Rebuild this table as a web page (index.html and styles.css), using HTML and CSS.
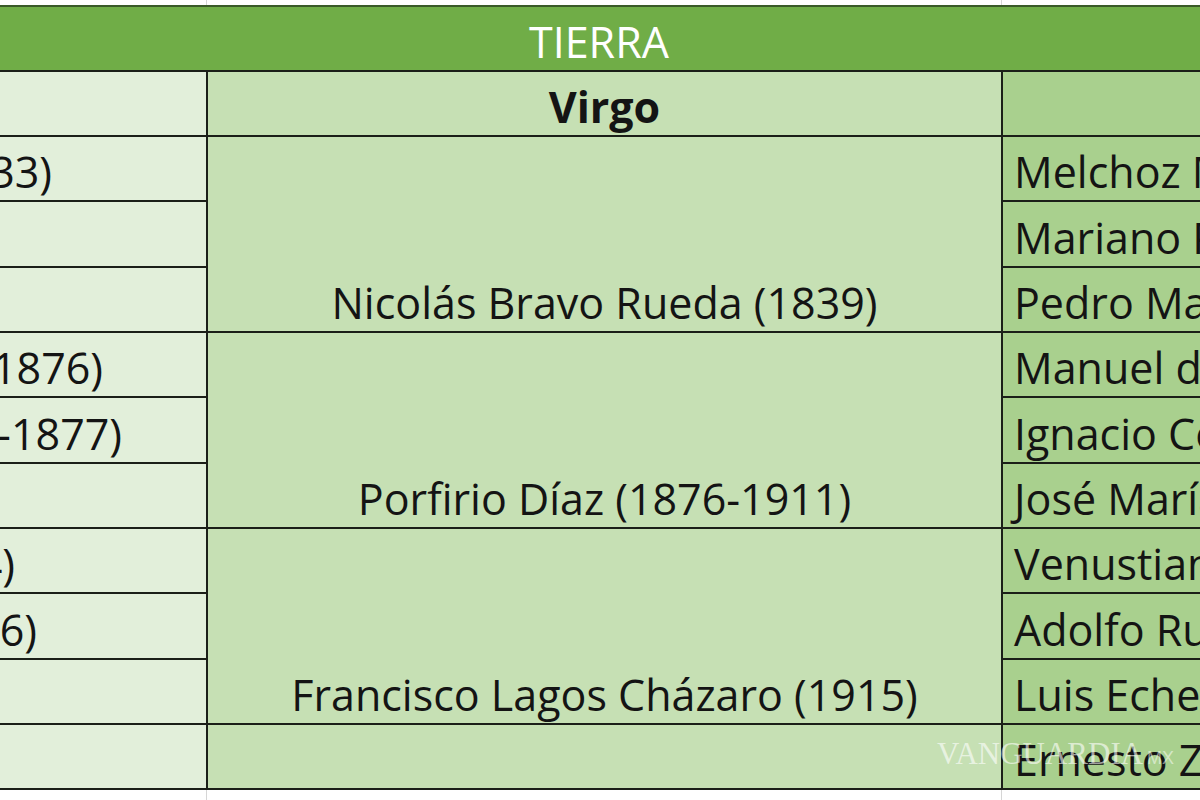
FILE: index.html
```html
<!DOCTYPE html>
<html lang="es">
<head>
<meta charset="utf-8">
<title>Tierra - Virgo</title>
<link rel="stylesheet" href="styles.css">
</head>
<body>
<div class="page">
  <div class="sheet">
    <div class="cell title">TIERRA</div>

    <div class="cell c1 head"></div>
    <div class="cell c2 head mid"><b>Virgo</b></div>
    <div class="cell c3 head"></div>

    <div class="cell c1 frag e52">(1833)</div>
    <div class="cell c2 mid span3">Nicolás Bravo Rueda (1839)</div>
    <div class="cell c3">Melchoz Múzquiz (1832)</div>
    <div class="cell c1"></div>
    <div class="cell c3">Mariano Paredes (1846)</div>
    <div class="cell c1"></div>
    <div class="cell c3">Pedro María Anaya (1847)</div>

    <div class="cell c1 frag e103">(1876)</div>
    <div class="cell c2 mid span3">Porfirio Díaz (1876-1911)</div>
    <div class="cell c3">Manuel de la Peña (1847)</div>
    <div class="cell c1 frag e122">(1876-1877)</div>
    <div class="cell c3">Ignacio Comonfort (1855)</div>
    <div class="cell c1"></div>
    <div class="cell c3">José María Iglesias (1876)</div>

    <div class="cell c1 frag e15">(1914)</div>
    <div class="cell c2 mid span3">Francisco Lagos Cházaro (1915)</div>
    <div class="cell c3">Venustiano Carranza (1917)</div>
    <div class="cell c1 frag e37">(1936)</div>
    <div class="cell c3">Adolfo Ruiz Cortines (1952)</div>
    <div class="cell c1"></div>
    <div class="cell c3">Luis Echeverría (1970)</div>

    <div class="cell c1"></div>
    <div class="cell c2 mid"></div>
    <div class="cell c3">Ernesto Zedillo (1994)</div>
  </div>
  <div class="watermark">VANGUARDIA<span class="mx">MX</span></div>
</div>
</body>
</html>
```

FILE: styles.css
```css
html, body {
  margin: 0;
  padding: 0;
  background: #ffffff;
  overflow: hidden;
}

.page {
  position: relative;
  width: 1200px;
  height: 800px;
  overflow: hidden;
  background-color: #ffffff;
  background-image:
    linear-gradient(to right, transparent 206px, #d6d6d6 206px, #d6d6d6 207px, transparent 207px),
    linear-gradient(to right, transparent 1001px, #d6d6d6 1001px, #d6d6d6 1002px, transparent 1002px);
  padding-top: 5px;
  box-sizing: border-box;
  font-family: "Open Sans", Lato, sans-serif;
}

.sheet {
  display: grid;
  width: 1500px;
  grid-template-columns: 206px 793px 497px;
  grid-template-rows: 63px 63px 63px 64px 63px 63px 64px 63px 63px 64px 63px 63px;
  gap: 2px;
  background: #1b1f18;
  border-top: 2px solid #3a5a28;
  border-bottom: 2px solid #1b1f18;
}

.cell {
  display: flex;
  align-items: flex-end;
  padding-bottom: 7px;
  box-sizing: border-box;
  font-size: 43px;
  line-height: 1;
  color: #141414;
  white-space: nowrap;
  overflow: hidden;
}

.title {
  grid-column: 1 / -1;
  background: #70ad47;
  color: #ffffff;
  justify-content: flex-start;
  padding-left: 529px;
  padding-bottom: 7px;
}

.c1 { grid-column: 1; background: #e2efda; }
.c2 { grid-column: 2; background: #c6e0b4; }
.c3 { grid-column: 3; background: #a9d08e; padding-left: 11px; }

.head { padding-bottom: 7px; }

.mid { justify-content: center; }
.mid b { font-weight: 700; }

.span3 { grid-row: span 3; }

.frag { justify-content: flex-end; }
.e52 { padding-right: 154px; }
.e103 { padding-right: 103px; }
.e122 { padding-right: 84px; }
.e15 { padding-right: 191px; }
.e37 { padding-right: 169px; }

.watermark {
  position: absolute;
  left: 937px;
  top: 738px;
  font-family: "Liberation Serif", serif;
  font-size: 31px;
  color: rgba(255, 255, 255, 0.6);
  line-height: 1;
}

.watermark .mx {
  font-family: "Liberation Sans", sans-serif;
  font-size: 18px;
  font-weight: 300;
  margin-left: 4px;
  color: rgba(255, 255, 255, 0.5);
}
```
